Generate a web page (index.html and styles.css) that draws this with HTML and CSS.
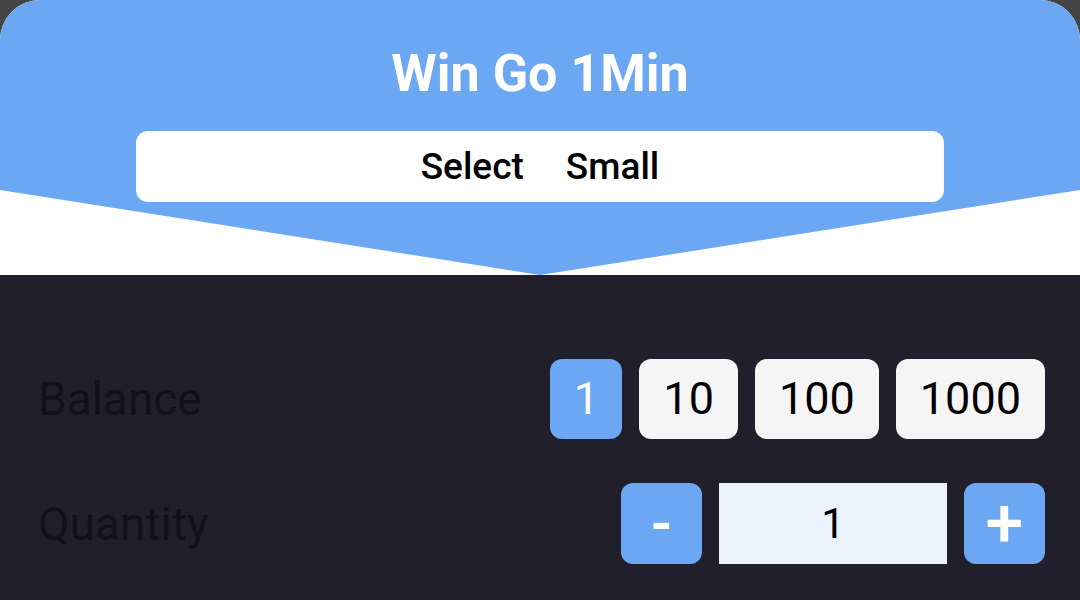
FILE: index.html
```html
<!DOCTYPE html>
<html lang="en">
<head>
<meta charset="utf-8">
<link rel="stylesheet" href="styles.css">
<title>Win Go 1Min</title>
</head>
<body>
<div class="sheet">
  <div class="top">
    <div class="banner">
      <h1 class="title">Win Go 1Min</h1>
      <div class="choice">
        <span>Select</span>
        <span>Small</span>
      </div>
    </div>
  </div>
  <div class="panel">
    <div class="row">
      <div class="label">Balance</div>
      <div class="chips">
        <button class="chip active">1</button>
        <button class="chip">10</button>
        <button class="chip">100</button>
        <button class="chip">1000</button>
      </div>
    </div>
    <div class="row">
      <div class="label">Quantity</div>
      <div class="stepper">
        <button class="step">-</button>
        <div class="qty">1</div>
        <button class="step plus">+</button>
      </div>
    </div>
  </div>
</div>
</body>
</html>
```
FILE: styles.css
```css
* { box-sizing: border-box; }
html, body {
  margin: 0;
  padding: 0;
}
body {
  width: 1080px;
  height: 600px;
  overflow: hidden;
  background: #444444;
  font-family: Roboto, "Noto Sans", sans-serif;
}
.sheet {
  width: 1080px;
  height: 600px;
  display: flex;
  flex-direction: column;
}
.top {
  background: #ffffff;
  border-radius: 40px 40px 0 0;
  overflow: hidden;
  height: 275px;
  flex: none;
}
.banner {
  height: 275px;
  background: #6ca7f3;
  clip-path: polygon(0 0, 100% 0, 100% 190px, 50% 100%, 0 190px);
  display: flex;
  flex-direction: column;
  align-items: center;
  padding-top: 45px;
}
.title {
  margin: 0;
  color: #ffffff;
  font-size: 52px;
  font-weight: 700;
  line-height: 58px;
}
.choice {
  margin-top: 28px;
  width: 808px;
  height: 71px;
  background: #ffffff;
  border-radius: 12px;
  display: flex;
  align-items: center;
  justify-content: center;
  gap: 42px;
  font-size: 37px;
  font-weight: 500;
  color: #000000;
}
.panel {
  flex: 1;
  background: #201f2b;
  padding: 83px 35px 0 38px;
  display: flex;
  flex-direction: column;
  gap: 44px;
}
.row {
  display: flex;
  align-items: center;
  justify-content: space-between;
  height: 81px;
}
.label {
  color: #111119;
  font-size: 46px;
  font-weight: 400;
}
.chips {
  display: flex;
  gap: 17px;
}
.chip {
  height: 80px;
  border: none;
  border-radius: 12px;
  background: #f5f5f5;
  color: #000000;
  font-family: Roboto, "Noto Sans", sans-serif;
  font-size: 45px;
  font-weight: 400;
  padding: 0 24px;
}
.chip.active {
  background: #6ca7f3;
  color: #ffffff;
  width: 72px;
  padding: 0;
}
.stepper {
  display: flex;
  gap: 17px;
}
.step {
  width: 81px;
  height: 81px;
  border: none;
  border-radius: 12px;
  background: #6ca7f3;
  color: #ffffff;
  font-family: Roboto, "Noto Sans", sans-serif;
  font-size: 56px;
  font-weight: 700;
  line-height: 1;
  padding: 0;
}
.step.plus {
  font-size: 68px;
  font-weight: 500;
}
.qty {
  width: 228px;
  height: 81px;
  background: #ecf2fc;
  color: #000000;
  display: flex;
  align-items: center;
  justify-content: center;
  font-size: 42px;
}
```
